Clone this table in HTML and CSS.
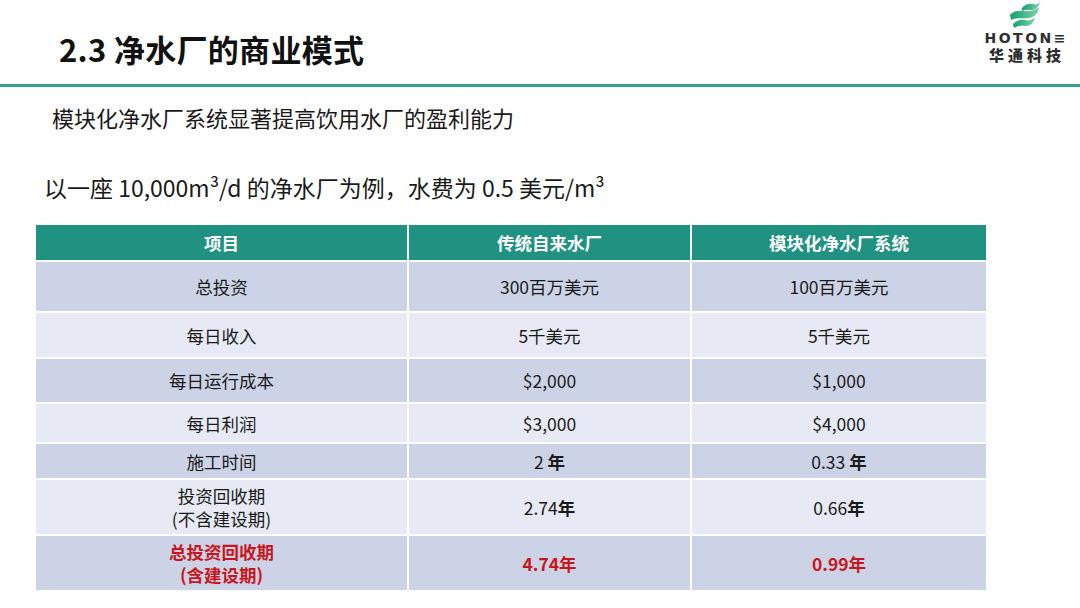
FILE: index.html
```html
<!DOCTYPE html>
<html lang="zh">
<head>
<meta charset="utf-8">
<title>2.3 净水厂的商业模式</title>
<link rel="stylesheet" href="styles.css">
</head>
<body>
<div class="slide">
  <header class="topbar">
    <h1 class="title">2.3 净水厂的商业模式</h1>
    <div class="logo">
      <svg class="logo-mark" width="34" height="26" viewBox="0 0 34 26">
        <defs>
          <linearGradient id="g1" x1="0" y1="0" x2="1" y2="0">
            <stop offset="0" stop-color="#12a070"/>
            <stop offset="1" stop-color="#7fd2a8"/>
          </linearGradient>
        </defs>
        <path d="M13 6 C16 2 20 1 24 2 C27 3 29 2 31 0 C30 4 27 8 23 8 C20 8 17 7 13 9 Z" fill="url(#g1)"/>
        <path d="M1 13 C5 9 10 8 15 9 C20 10 25 9 30 5 C30 10 26 15 20 16 C14 17 8 15 2 18 Z" fill="url(#g1)"/>
        <path d="M4 22 C8 18 12 17 16 18 C20 19 23 18 26 15 C25 20 22 24 17 24 C13 24 9 23 5 26 Z" fill="url(#g1)"/>
      </svg>
      <div class="logo-en">HOTON≡</div>
      <div class="logo-cn">华通科技</div>
    </div>
  </header>
  <div class="rule"></div>
  <p class="lead">模块化净水厂系统显著提高饮用水厂的盈利能力</p>
  <p class="example">以一座 10,000m³/d 的净水厂为例，水费为 0.5 美元/m³</p>
  <table class="compare">
    <colgroup>
      <col class="c1"><col class="c2"><col class="c3">
    </colgroup>
    <thead>
      <tr class="h"><th>项目</th><th>传统自来水厂</th><th>模块化净水厂系统</th></tr>
    </thead>
    <tbody>
      <tr class="dark r1"><td>总投资</td><td>300百万美元</td><td>100百万美元</td></tr>
      <tr class="light r2"><td>每日收入</td><td>5千美元</td><td>5千美元</td></tr>
      <tr class="dark r3"><td>每日运行成本</td><td>$2,000</td><td>$1,000</td></tr>
      <tr class="light r4"><td>每日利润</td><td>$3,000</td><td>$4,000</td></tr>
      <tr class="dark r5"><td>施工时间</td><td>2 <b>年</b></td><td>0.33 <b>年</b></td></tr>
      <tr class="light r6"><td>投资回收期<br>(不含建设期)</td><td>2.74<b>年</b></td><td>0.66<b>年</b></td></tr>
      <tr class="dark r7 red"><td>总投资回收期<br>(含建设期)</td><td>4.74年</td><td>0.99年</td></tr>
    </tbody>
  </table>
</div>
</body>
</html>
```

FILE: styles.css
```css
html, body {
  margin: 0;
  padding: 0;
  background: #ffffff;
}
body {
  font-family: "Noto Sans CJK SC", "Open Sans", sans-serif;
  color: #1a1a1a;
}
.slide {
  width: 1080px;
  height: 608px;
  overflow: hidden;
}
.topbar {
  height: 84px;
  display: flex;
  justify-content: space-between;
  align-items: flex-start;
}
.title {
  margin: 29px 0 0 59px;
  font-size: 31px;
  line-height: 40px;
  font-weight: 700;
  color: #111;
  letter-spacing: 0.3px;
}
.logo {
  width: 100px;
  margin: 2px 5px 0 0;
  display: flex;
  flex-direction: column;
  align-items: center;
}
.logo-mark {
  display: block;
  margin-left: 2px;
}
.logo-en {
  margin-top: 2px;
  font-family: "DejaVu Sans", sans-serif;
  font-weight: 700;
  font-size: 14px;
  line-height: 16px;
  letter-spacing: 2.5px;
  margin-right: -2.5px;
  color: #2e2e2e;
}
.logo-cn {
  margin-top: 0;
  font-weight: 900;
  font-size: 15px;
  line-height: 18px;
  letter-spacing: 4px;
  margin-right: -4px;
  color: #2e2e2e;
}
.rule {
  height: 3px;
  background: #3a9e98;
}
.lead {
  margin: 15px 0 0 52px;
  font-size: 22px;
  line-height: 30px;
  color: #1a1a1a;
}
.example {
  margin: 39px 0 0 44px;
  font-size: 23px;
  line-height: 32px;
  color: #1a1a1a;
}
.compare {
  margin: 22px 0 0 36px;
  width: 950px;
  border-collapse: collapse;
  table-layout: fixed;
  font-size: 17.5px;
  text-align: center;
}
.c1 { width: 372px; }
.c2 { width: 283px; }
.c3 { width: 295px; }
.compare th,
.compare td {
  border: 2px solid #ffffff;
  padding: 0;
  line-height: 23px;
}
.compare thead th {
  background: #1f9282;
  color: #ffffff;
  font-weight: 700;
  height: 35px;
  border-top: 0;
}
.compare th:first-child,
.compare td:first-child { border-left: 0; }
.compare th:last-child,
.compare td:last-child { border-right: 0; }
.compare tr:last-child td { border-bottom: 0; }
.dark td { background: #ccd3e6; }
.light td { background: #e7eaf4; }
.compare b { font-weight: 700; }
.r1 td { height: 49px; }
.r2 td { height: 44px; }
.r3 td { height: 43px; }
.r4 td { height: 38px; }
.r5 td { height: 34px; }
.r6 td { height: 54px; }
.r7 td { height: 54px; }
.red td {
  color: #c8161d;
  font-weight: 700;
}
```
